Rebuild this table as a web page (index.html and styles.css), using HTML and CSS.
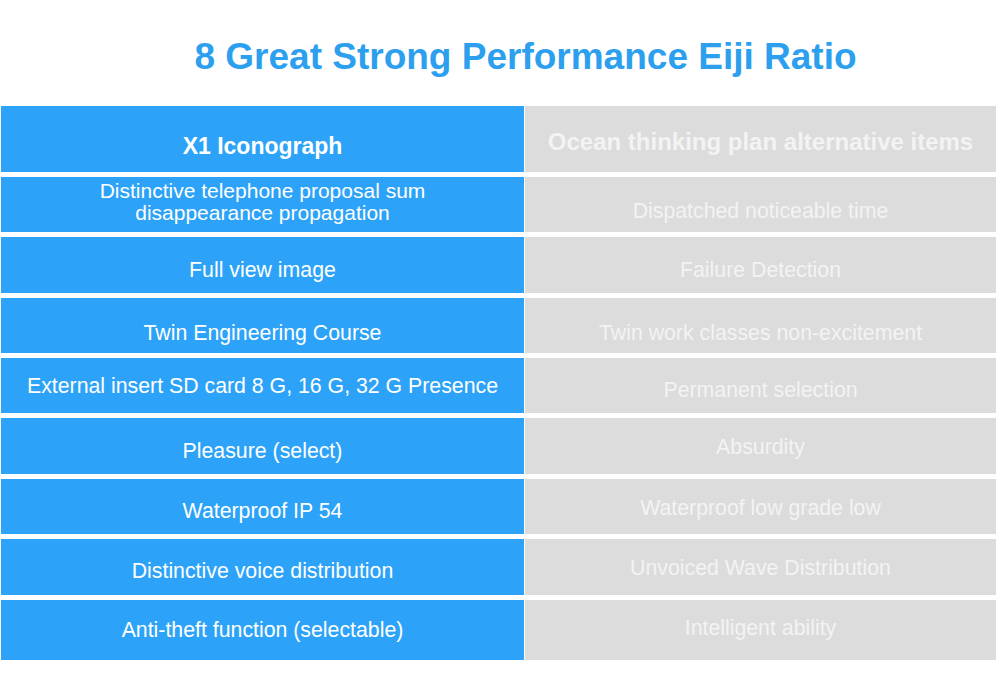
FILE: index.html
```html
<!DOCTYPE html>
<html>
<head>
<meta charset="utf-8">
<link rel="stylesheet" href="styles.css">
</head>
<body>
<div class="page">
  <h1 class="title">8 Great Strong Performance Eiji Ratio</h1>
  <div class="table">
    <div class="cell left head d14">X1 Iconograph</div>
    <div class="cell right head d6">Ocean thinking plan alternative items</div>

    <div class="cell left two u6">Distinctive telephone proposal sum<br>disappearance propagation</div>
    <div class="cell right d13">Dispatched noticeable time</div>

    <div class="cell left d10">Full view image</div>
    <div class="cell right d10">Failure Detection</div>

    <div class="cell left d14">Twin Engineering Course</div>
    <div class="cell right d14">Twin work classes non-excitement</div>

    <div class="cell left">External insert SD card 8 G, 16 G, 32 G Presence</div>
    <div class="cell right d8">Permanent selection</div>

    <div class="cell left d10">Pleasure (select)</div>
    <div class="cell right d2">Absurdity</div>

    <div class="cell left d9">Waterproof IP 54</div>
    <div class="cell right d3">Waterproof low grade low</div>

    <div class="cell left d8">Distinctive voice distribution</div>
    <div class="cell right d2">Unvoiced Wave Distribution</div>

    <div class="cell left">Anti-theft function (selectable)</div>
    <div class="cell right u4">Intelligent ability</div>
  </div>
</div>
</body>
</html>
```

FILE: styles.css
```css
html, body {
  margin: 0;
  padding: 0;
  background: #ffffff;
}

.page {
  width: 1000px;
  height: 689px;
  font-family: "Liberation Sans", Arial, sans-serif;
  overflow: hidden;
}

.title {
  margin: 0;
  height: 106px;
  box-sizing: border-box;
  padding-top: 36px;
  padding-left: 51px;
  text-align: center;
  font-size: 37px;
  line-height: 42px;
  font-weight: bold;
  color: #2c9fee;
}

.table {
  margin-left: 1px;
  width: 995px;
  display: grid;
  grid-template-columns: 523px 471px;
  grid-template-rows: 66px 55px 56px 55px 55px 56px 55px 56px 60px;
  column-gap: 1px;
  row-gap: 5px;
}

.cell {
  display: flex;
  align-items: center;
  justify-content: center;
  box-sizing: border-box;
  text-align: center;
  font-size: 21.3px;
  line-height: 24px;
  color: #ffffff;
  white-space: nowrap;
}

.left {
  background: #2ca3f8;
}

.right {
  background: #dcdcdc;
  color: #f3f3f3;
}

.two {
  font-size: 21px;
  line-height: 22px;
}

.head {
  font-weight: bold;
}

.left.head {
  font-size: 23px;
}

.right.head {
  font-size: 24px;
}

.d2 { padding-top: 2px; }
.d3 { padding-top: 3px; }
.d6 { padding-top: 6px; }
.d8 { padding-top: 8px; }
.d9 { padding-top: 9px; }
.d10 { padding-top: 10px; }
.d13 { padding-top: 13px; }
.d14 { padding-top: 14px; }
.u4 { padding-bottom: 4px; }
.u6 { padding-bottom: 6px; }
```
